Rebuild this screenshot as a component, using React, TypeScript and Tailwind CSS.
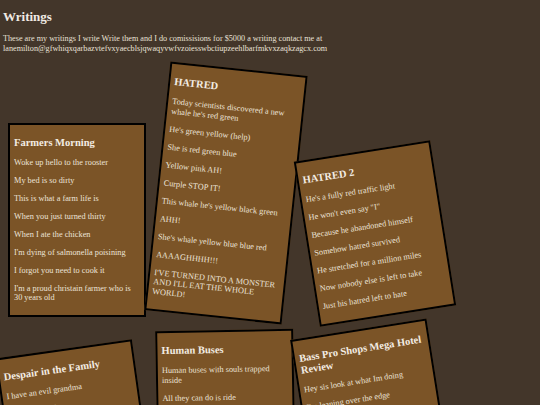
type Writing = {
  title: string;
  lines: string[];
  // rotation and any per-card tweaks
  className: string;
};

const writings: Writing[] = [
  {
    title: "Farmers Morning",
    lines: [
      "Woke up hello to the rooster",
      "My bed is so dirty",
      "This is what a farm life is",
      "When you just turned thirty",
      "When I ate the chicken",
      "I'm dying of salmonella poisining",
      "I forgot you need to cook it",
      "I'm a proud christain farmer who is 30 years old",
    ],
    className: "",
  },
  {
    title: "HATRED",
    lines: [
      "Today scientists discovered a new whale he's red green",
      "He's green yellow (help)",
      "She is red green blue",
      "Yellow pink AH!",
      "Curple STOP IT!",
      "This whale he's yellow black green",
      "AHH!",
      "She's whale yellow blue blue red",
      "AAAAGHHHH!!!",
      "I'VE TURNED INTO A MONSTER AND I'LL EAT THE WHOLE WORLD!",
    ],
    className: "rotate-[6deg]",
  },
  {
    title: "HATRED 2",
    lines: [
      "He's a fully red traffic light",
      'He won\'t even say "I"',
      "Because he abandoned himself",
      "Somehow hatred survived",
      "He stretched for a million miles",
      "Now nobody else is left to take",
      "Just his hatred left to hate",
    ],
    className: "-rotate-[9deg]",
  },
  {
    title: "Despair in the Family",
    lines: ["I have an evil grandma", "She casts spells"],
    className: "-rotate-[8deg] h-[194px]",
  },
  {
    title: "Human Buses",
    lines: ["Human buses with souls trapped inside", "All they can do is ride"],
    className: "-rotate-1 h-[212px]",
  },
  {
    title: "Bass Pro Shops Mega Hotel Review",
    lines: ["Hey sis look at what Im doing", "I'm leaning over the edge"],
    className: "-rotate-[9deg] h-[214px]",
  },
];

const WritingCard = ({ writing }: { writing: Writing }) => (
  <div
    className={`w-[138px] shrink-0 overflow-hidden border-2 border-black bg-[#7b5427] px-1 py-1 ${writing.className}`}
  >
    <h3 className="mt-[8px] mb-[9.5px] text-[10.5px] font-bold leading-[11.6px] text-[#f3ece3]">
      {writing.title}
    </h3>
    {writing.lines.map((line) => (
      <p key={line} className="my-[8.5px] text-[8.3px] leading-[9.5px] text-[#ece3d8]">
        {line}
      </p>
    ))}
  </div>
);

export default function App() {
  return (
    <div
      className="min-h-screen overflow-hidden bg-[#43362a] px-[3px] pt-[9px] text-[#e8e0d6]"
      style={{ fontFamily: '"Liberation Serif", "Times New Roman", serif' }}
    >
      <h1 className="text-[13px] font-bold leading-[15px] text-[#f1ebe4]">Writings</h1>
      <p className="mt-[9.5px] text-[8.2px] leading-[10px]">
        These are my writings I write Write them and I do comissisions for $5000 a writing contact me at
        lanemilton@gfwhiqxqarbazvtefvxyaecblsjqwaqyvwfvzoiesswbctiupzeehlbarfmkvxzaqkzagcx.com
      </p>
      <div className="mt-[14px] flex flex-wrap items-end gap-[11px] pl-[5px]">
        {writings.map((w) => (
          <WritingCard key={w.title} writing={w} />
        ))}
      </div>
    </div>
  );
}
